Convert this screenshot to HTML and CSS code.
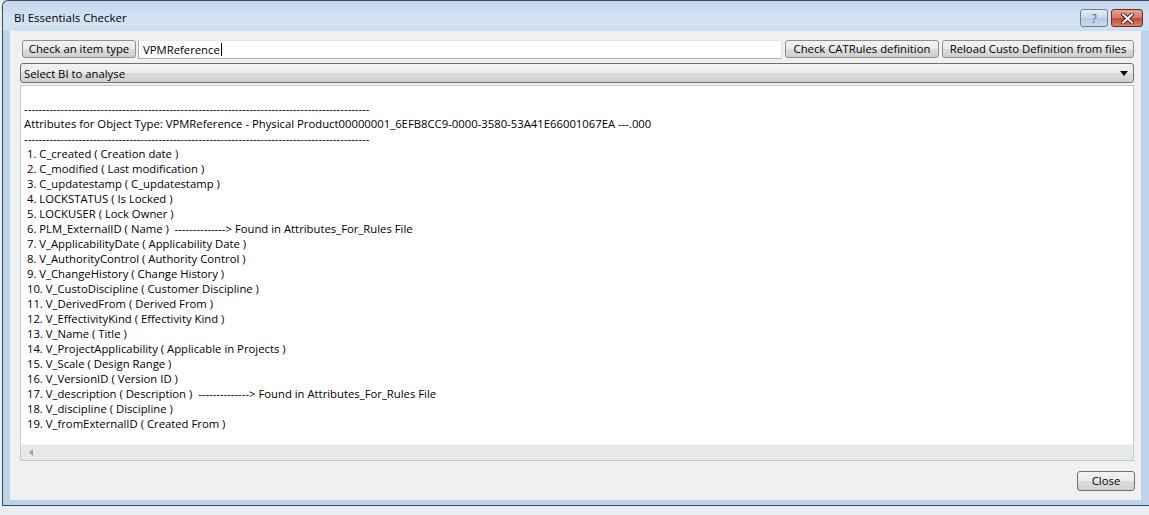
FILE: index.html
```html
<!doctype html>
<html lang="en">
<head>
	<meta charset="UTF-8">
	<title>BI Essentials Checker</title>
	<link rel="stylesheet" href="styles.css">
</head>
<body>
	<div class="win">
		<div class="titlebar">
			<span class="title">BI Essentials Checker</span>
			<div class="capbtns">
				<span class="cap help">?</span>
				<span class="cap close">
					<svg width="13" height="11" viewBox="0 0 13 11">
						<path d="M2 1.5 L11 9.5 M11 1.5 L2 9.5" stroke="#5a1a12" stroke-width="4" stroke-linecap="square"/>
						<path d="M2 1.5 L11 9.5 M11 1.5 L2 9.5" stroke="#fff" stroke-width="2" stroke-linecap="square"/>
					</svg>
				</span>
			</div>
		</div>
		<div class="client">
			<div class="row">
				<button class="btn first">Check an item type</button>
				<div class="input">VPMReference<span class="caret"></span></div>
				<button class="btn">Check CATRules definition</button>
				<button class="btn">Reload Custo Definition from files</button>
			</div>
			<div class="combo">
				<span>Select BI to analyse</span>
				<svg width="8" height="5" viewBox="0 0 8 5"><path d="M0 0 H8 L4 5 Z" fill="#000"/></svg>
			</div>
			<div class="output">
				<div class="text">
					<div class="ln">-----------------------------------------------------------------------------------------------</div>
					<div class="ln">Attributes for Object Type: VPMReference - Physical Product00000001_6EFB8CC9-0000-3580-53A41E66001067EA ---.000</div>
					<div class="ln">-----------------------------------------------------------------------------------------------</div>
					<div class="ln"> 1. C_created ( Creation date )</div>
					<div class="ln"> 2. C_modified ( Last modification )</div>
					<div class="ln"> 3. C_updatestamp ( C_updatestamp )</div>
					<div class="ln"> 4. LOCKSTATUS ( Is Locked )</div>
					<div class="ln"> 5. LOCKUSER ( Lock Owner )</div>
					<div class="ln"> 6. PLM_ExternalID ( Name )  --------------&gt; Found in Attributes_For_Rules File</div>
					<div class="ln"> 7. V_ApplicabilityDate ( Applicability Date )</div>
					<div class="ln"> 8. V_AuthorityControl ( Authority Control )</div>
					<div class="ln"> 9. V_ChangeHistory ( Change History )</div>
					<div class="ln"> 10. V_CustoDiscipline ( Customer Discipline )</div>
					<div class="ln"> 11. V_DerivedFrom ( Derived From )</div>
					<div class="ln"> 12. V_EffectivityKind ( Effectivity Kind )</div>
					<div class="ln"> 13. V_Name ( Title )</div>
					<div class="ln"> 14. V_ProjectApplicability ( Applicable in Projects )</div>
					<div class="ln"> 15. V_Scale ( Design Range )</div>
					<div class="ln"> 16. V_VersionID ( Version ID )</div>
					<div class="ln"> 17. V_description ( Description )  --------------&gt; Found in Attributes_For_Rules File</div>
					<div class="ln"> 18. V_discipline ( Discipline )</div>
					<div class="ln"> 19. V_fromExternalID ( Created From )</div>
				</div>
				<div class="hscroll">
					<svg width="4" height="7" viewBox="0 0 4 7"><path d="M4 0 V7 L0 3.5 Z" fill="#a0a0a0"/></svg>
				</div>
			</div>
			<div class="footer">
				<button class="btn closebtn">Close</button>
			</div>
		</div>
	</div>
</body>
</html>
```

FILE: styles.css
```css
html, body { margin:0; height:100%; }
body { background:#e9eef3; font-family:"Open Sans", "Noto Sans", sans-serif; font-size:11.3px; color:#000; overflow:hidden; }
.win { margin-left:2px; width:1147px; height:506px; box-sizing:border-box; border:1px solid #3a4a5c; border-right:none; border-radius:6px 0 0 0; background:#bdd3eb; display:flex; flex-direction:column; }
.titlebar { flex:0 0 30px; display:flex; align-items:center; padding-left:11px; background:linear-gradient(#c4d7ed, #d5e3f3 60%, #cddff2); border-radius:6px 0 0 0; }
.title { font-size:11.5px; color:#000; padding-top:2px; }
.capbtns { margin-left:auto; margin-right:6px; display:flex; gap:3px; align-self:flex-start; margin-top:8px; }
.cap { height:16px; border:1px solid #6d7e93; border-radius:3px; display:flex; align-items:center; justify-content:center; box-sizing:content-box; }
.help { width:26px; background:linear-gradient(#e4edf7, #c9d9ec 50%, #b4c9e3 51%, #c8daf0); color:#56677d; font-size:12px; }
.close { width:30px; border-color:#6e2a22; background:linear-gradient(#e6a597, #d47865 50%, #c04b35 51%, #d6806a); }
.client { flex:1; min-height:0; margin:0 8px 5px 7px; background:#f0f0f0; padding:9px 7px 0 10px; display:flex; flex-direction:column; }
.row { display:flex; flex-shrink:0; height:18px; gap:2px; }
.btn { font-family:inherit; font-size:11.3px; color:#000; height:18px; padding:0 4px; border:1px solid #8e8f8f; border-radius:3px; background:linear-gradient(#f2f2f2, #ebebeb 50%, #dddddd 51%, #cfcfcf); white-space:nowrap; line-height:14px; }
.btn.first { margin-left:2px; width:114px; }
.input { flex:1; box-sizing:border-box; height:19px; border:1px solid #abadb3; border-top-color:#e3e9ef; border-right-color:#dbdfe6; background:#fff; padding:1px 4px; line-height:15px; display:flex; align-items:center; }
.caret { display:inline-block; width:1px; height:13px; background:#000; margin-left:1px; }
.row .btn:nth-of-type(2) { width:154px; margin-left:1px; }
.row .btn:nth-of-type(3) { width:192px; margin-left:1px; }
.combo { flex-shrink:0; margin-top:5px; height:20px; box-sizing:border-box; border:1px solid #707070; border-radius:3px; background:linear-gradient(#f2f2f2, #ebebeb 50%, #dddddd 51%, #cfcfcf); display:flex; align-items:center; justify-content:space-between; padding:0 5px 0 3px; }
.output { margin-top:2px; flex:0 0 376px; box-sizing:border-box; border:1px solid #b7cde0; background:#fff; display:flex; flex-direction:column; }
.text { flex:1; padding:15px 0 0 3px; overflow:hidden; }
.ln { height:15px; line-height:15px; white-space:pre; }
.hscroll { flex:0 0 15px; background:#e8e8e8; border-top:1px solid #f4f4f4; display:flex; align-items:center; padding-left:8px; }
.footer { display:flex; justify-content:flex-end; padding-top:10px; }
.closebtn { width:58px; height:20px; margin-right:-1px; border-color:#707070; }
```
